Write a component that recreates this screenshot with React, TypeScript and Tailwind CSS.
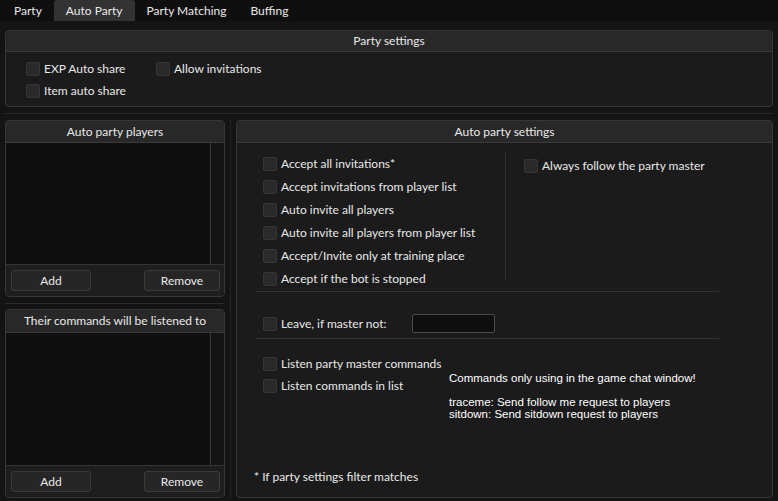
import React from "react";

const FONT = { fontFamily: '"Segoe UI", Lato, "Noto Sans", sans-serif' };

function Check({ label, className = "" }: { label: string; className?: string }) {
  return (
    <div className={`flex items-center ${className}`}>
      <div className="w-[14px] h-[14px] rounded-[2px] bg-[#2a2a2a] border border-[#363636] shrink-0" />
      <span className="ml-[4px] whitespace-nowrap">{label}</span>
    </div>
  );
}

function Header({ title, h }: { title: string; h: string }) {
  return (
    <div className={`${h} shrink-0 bg-[#282828] border-b border-[#3a3a3a] flex items-center justify-center rounded-t-[4px]`}>
      {title}
    </div>
  );
}

function Btn({ label, w }: { label: string; w: string }) {
  return (
    <div className={`${w} h-[21px] rounded-[3px] bg-[#262626] border border-[#3a3a3a] flex items-center justify-center`}>
      {label}
    </div>
  );
}

function ListGroup({ title, h, headerH }: { title: string; h: string; headerH: string }) {
  return (
    <div className={`${h} flex flex-col rounded-[4px] border border-[#363636] bg-[#1b1b1b] overflow-hidden`}>
      <Header title={title} h={headerH} />
      <div className="flex-1 flex">
        <div className="flex-1 bg-[#0f0f0f] border-r border-[#3a3a3a]" />
        <div className="w-[13px] bg-[#141414]" />
      </div>
      <div className="h-[32px] shrink-0 border-t border-[#333] bg-[#1e1e1e] flex items-center justify-between pl-[5px] pr-[4px]">
        <Btn label="Add" w="w-[80px]" />
        <Btn label="Remove" w="w-[76px]" />
      </div>
    </div>
  );
}

export default function App() {
  return (
    <div className="w-[778px] h-[501px] bg-[#141414] text-[#e8e8e8] text-[12px] flex flex-col overflow-hidden" style={FONT}>
      {/* Tab bar */}
      <div className="h-[21px] shrink-0 bg-[#0f0f0f] flex pl-[2px]">
        <div className="px-[12px] flex items-center">Party</div>
        <div className="px-[12px] flex items-center bg-[#333333] rounded-t-[3px]">Auto Party</div>
        <div className="px-[12px] flex items-center">Party Matching</div>
        <div className="px-[12px] flex items-center">Buffing</div>
      </div>

      <div className="flex-1 flex flex-col px-[5px] pt-[9px] pb-[4px]">
        {/* Party settings */}
        <div className="h-[77px] shrink-0 flex flex-col rounded-[4px] border border-[#363636] bg-[#1b1b1b]">
          <Header title="Party settings" h="h-[21px]" />
          <div className="flex pl-[20px] pt-[6px]">
            <div className="w-[130px] flex flex-col">
              <Check label="EXP Auto share" className="h-[22px]" />
              <Check label="Item auto share" className="h-[22px]" />
            </div>
            <div>
              <Check label="Allow invitations" className="h-[22px]" />
            </div>
          </div>
        </div>

        {/* splitter */}
        <div className="h-px bg-[#2a2a2a] mt-[6px] mb-[6px] shrink-0" />

        <div className="flex-1 flex">
          {/* Left column */}
          <div className="w-[220px] flex flex-col">
            <ListGroup title="Auto party players" h="h-[177px]" headerH="h-[22px]" />
            <div className="h-px bg-[#2a2a2a] mt-[6px] mb-[5px] shrink-0" />
            <ListGroup title="Their commands will be listened to" h="h-[189px]" headerH="h-[23px]" />
          </div>

          <div className="w-[11px] flex justify-center">
            <div className="w-px bg-[#262626]" />
          </div>

          {/* Right group */}
          <div className="flex-1 h-[378px] flex flex-col rounded-[4px] border border-[#363636] bg-[#1b1b1b]">
            <Header title="Auto party settings" h="h-[22px]" />
            <div className="flex-1 flex flex-col">
              <div className="flex">
                <div className="w-[268px] pl-[26px] pt-[9px] flex flex-col">
                  <Check label="Accept all invitations*" className="h-[23px]" />
                  <Check label="Accept invitations from player list" className="h-[23px]" />
                  <Check label="Auto invite all players" className="h-[23px]" />
                  <Check label="Auto invite all players from player list" className="h-[23px]" />
                  <Check label="Accept/Invite only at training place" className="h-[23px]" />
                  <Check label="Accept if the bot is stopped" className="h-[23px]" />
                </div>
                <div className="w-px h-[130px] mt-[8px] bg-[#2e2e2e]" />
                <div className="pl-[18px] pt-[11px]">
                  <Check label="Always follow the party master" className="h-[23px]" />
                </div>
              </div>

              <div className="ml-[18px] w-[464px] h-px bg-[#333] mt-[1px]" />

              <div className="flex items-center h-[23px] mt-[20px] pl-[26px]">
                <Check label="Leave, if master not:" />
                <div className="ml-[25px] w-[83px] h-[19px] bg-[#0f0f0f] border border-[#4a4a4a] rounded-[2px]" />
              </div>

              <div className="ml-[18px] w-[464px] h-px bg-[#333] mt-[3px]" />

              <div className="flex mt-[14px]">
                <div className="w-[212px] pl-[26px] flex flex-col">
                  <Check label="Listen party master commands" className="h-[22px]" />
                  <Check label="Listen commands in list" className="h-[22px]" />
                </div>
                <div
                  className="mt-[19px] text-[11.5px] leading-[12px] text-white"
                  style={{ fontFamily: '"Liberation Sans", sans-serif' }}
                >
                  <div>Commands only using in the game chat window!</div>
                  <div className="h-[12px]" />
                  <div>traceme: Send follow me request to players</div>
                  <div>sitdown: Send sitdown request to players</div>
                </div>
              </div>

              <div className="flex-1" />
              <div className="pl-[17px] pb-[12px] leading-[16px]">* If party settings filter matches</div>
            </div>
          </div>
        </div>
      </div>
    </div>
  );
}
